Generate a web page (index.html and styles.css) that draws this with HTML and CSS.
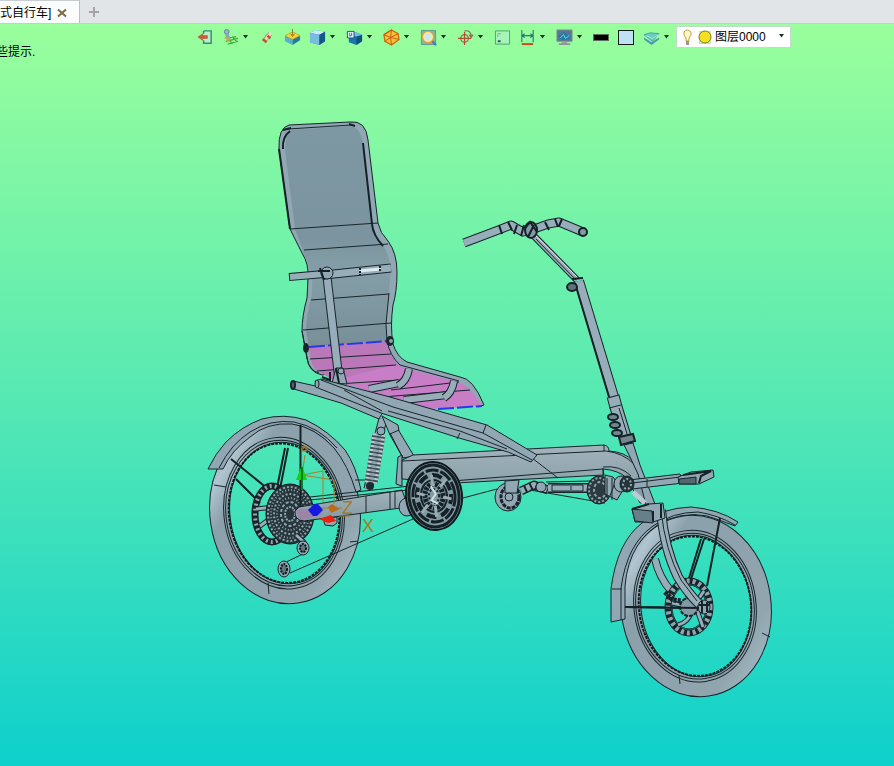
FILE: index.html
```html
<!DOCTYPE html>
<html lang="zh-CN">
<head>
<meta charset="utf-8">
<meta name="viewport" content="width=device-width, initial-scale=1">
<title>自行车</title>
<link rel="stylesheet" href="styles.css">
</head>
<body>
<div class="app">
<header class="tabs">
  <div class="tab"><span>式自行车]</span>
    <button class="tab-button" aria-label="关闭"><svg width="10" height="10" viewBox="0 0 10 10"><path d="M1 1.5L9 8.500M9 1.500L1 8.500" stroke="#806840" stroke-width="2"/></svg></button>
  </div>
  <button class="tab-button add" aria-label="新建"><svg width="12" height="12" viewBox="0 0 12 12"><path d="M6 1V11M1 6H11" stroke="#a6a2a8" stroke-width="2"/></svg></button>
</header>
<main class="viewport">
  <nav class="toolbar" aria-label="视图">
    <button class="tool" aria-label="退出"><svg viewBox="0 0 18 18"><path d="M7 2H15V15H7V12M7 5V2" fill="#b8eec8" stroke="#388878" stroke-width="1.500"/><path d="M1 8.500L6 5V7H11V10H6V12Z" fill="#d85838" stroke="#a04428" stroke-width=".5"/></svg></button>
    <button class="tool menu" aria-label="草图"><svg viewBox="0 0 18 18"><path d="M3 10L15 8M4 13L17 10M6 16L17 13M6 9L11 16M11 8L16 14" stroke="#48a838" stroke-width="1.300"/><circle cx="5" cy="3" r="2.500" fill="#98b8c8" stroke="#5c8498"/><path d="M3 6L7 5L9 11L5 10Z" fill="#88a8b8"/><path d="M3 9L8 12" stroke="#e8a830" stroke-width="2"/></svg><svg class="caret" viewBox="0 0 7 4"><path d="M1 0H6L3.500 3.500Z"/></svg></button>
    <button class="tool" aria-label="刷"><svg viewBox="0 0 18 18"><path d="M5 13L12 5" stroke="#b89878" stroke-width="5"/><path d="M7 11L13 4" stroke="#e8ddc8" stroke-width="3"/><path d="M4 11L8 14M9 7L12 10" stroke="#d84c28" stroke-width="2.500"/></svg></button>
    <button class="tool" aria-label="平面"><svg viewBox="0 0 18 18"><path d="M1 7L9 10V17L1 13Z" fill="#58b0cc"/><path d="M9 10L17 7V12L9 17Z" fill="#2878a0"/><path d="M1 7L9 3L17 7L9 11Z" fill="#f8d830" stroke="#a89830" stroke-width=".7"/><path d="M9 0V7M7 5L9 8L11 5" stroke="#907818" fill="none"/></svg></button>
    <button class="tool menu" aria-label="着色"><svg viewBox="0 0 18 18"><path d="M1 4L7 1L17 3V13L11 17L1 14Z" fill="#3888b8"/><path d="M1 4L7 1L17 3L11 6Z" fill="#c8ecf8"/><path d="M1 4L11 6V17L1 14Z" fill="#78bce0"/><path d="M11 6L17 3V13L11 17Z" fill="#185888"/></svg><svg class="caret" viewBox="0 0 7 4"><path d="M1 0H6L3.500 3.500Z"/></svg></button>
    <button class="tool menu" aria-label="视图"><svg viewBox="0 0 18 18"><path d="M3 6L9 3L17 6V13L11 17L3 14Z" fill="#1878a8"/><path d="M11 8L17 6V13L11 17Z" fill="#105080"/><path d="M3 6L9 3L17 6L11 8Z" fill="#70c0e0"/><path d="M1.500 2.500H8.500V9.500H1.500Z" fill="#e8f8ff" stroke="#284878"/><path d="M4 4V8M6 4V7H4" stroke="#3868a0" fill="none"/></svg><svg class="caret" viewBox="0 0 7 4"><path d="M1 0H6L3.500 3.500Z"/></svg></button>
    <button class="tool menu" aria-label="线框"><svg viewBox="0 0 18 18"><path d="M9 1L16 5L17 11L9 17L2 13L1 6Z" fill="#f8c040" stroke="#c86808" stroke-width="1.300"/><path d="M9 1L8 9L1 6M8 9L16 5M8 9L17 11M8 9L9 17M8 9L2 13M1 6L9 1" stroke="#c05c08" fill="none"/></svg><svg class="caret" viewBox="0 0 7 4"><path d="M1 0H6L3.500 3.500Z"/></svg></button>
    <button class="tool menu" aria-label="缩放"><svg viewBox="0 0 18 18"><path d="M1.500 1.500H16.500V16.500H1.500Z" fill="#78b8a8" stroke="#609890"/><circle cx="8.500" cy="8.500" r="6" fill="#f8eca0" stroke="#e8a038" stroke-width="1.500"/><path d="M5 5H11V12H5Z" fill="#c8e8f8"/><path d="M13 13L17 17" stroke="#4880b0" stroke-width="2.500"/></svg><svg class="caret" viewBox="0 0 7 4"><path d="M1 0H6L3.500 3.500Z"/></svg></button>
    <button class="tool menu" aria-label="定位"><svg viewBox="0 0 18 18"><circle cx="8" cy="10" r="4" fill="none" stroke="#a06048" stroke-width="1.300"/><path d="M8 3V17M1 10H15" stroke="#b84830" stroke-width="1.300"/><path d="M8 2Q15 1 15 8M13 6L15 9L17 6" fill="none" stroke="#886858" stroke-width="1.200"/></svg><svg class="caret" viewBox="0 0 7 4"><path d="M1 0H6L3.500 3.500Z"/></svg></button>
    <button class="tool" aria-label="窗口"><svg viewBox="0 0 18 18"><path d="M1.500 2H16.500V16H1.500Z" fill="#a8f4b8" stroke="#48a070"/><path d="M4 12H7V14H4Z" fill="#205858"/><path d="M4 8V6M4 5H7" stroke="#68a888"/></svg></button>
    <button class="tool menu" aria-label="标注"><svg viewBox="0 0 18 18"><path d="M3 1V14M15 1V14M3 7H15M3 7L6 5M3 7L6 9M15 7L12 5M15 7L12 9" stroke="#287880" stroke-width="1.200" fill="none"/><path d="M3 16H15" stroke="#c84820" stroke-width="2"/></svg><svg class="caret" viewBox="0 0 7 4"><path d="M1 0H6L3.500 3.500Z"/></svg></button>
    <button class="tool menu" aria-label="显示"><svg viewBox="0 0 18 18"><path d="M1 1H17V13H1Z" fill="#587890" stroke="#888898"/><path d="M6 14H12V15H15V17H3V15H6Z" fill="#989098"/><path d="M3 11V7L7 5L9 3L12 6L15 8V11Z" fill="#2878a8"/><path d="M4 10L8 6L10 10L14 7" stroke="#70d8f8" fill="none"/></svg><svg class="caret" viewBox="0 0 7 4"><path d="M1 0H6L3.500 3.500Z"/></svg></button>
    <button class="tool" aria-label="线色"><span class="swatch line"></span></button>
    <button class="tool" aria-label="背景色"><span class="swatch square"></span></button>
    <button class="tool menu" aria-label="图层"><svg viewBox="0 0 18 18"><path d="M1 9L9 14L17 9V11L9 17L1 11Z" fill="#5098b0"/><path d="M1 6L8 4L17 5L10 13Z" fill="#68ccc0" stroke="#4ca0a0"/><path d="M3 7L10 10L17 6" stroke="#a8eee0" fill="none"/></svg><svg class="caret" viewBox="0 0 7 4"><path d="M1 0H6L3.500 3.500Z"/></svg></button>
    <div class="layer">
      <select aria-label="当前图层"><option>图层0000</option></select>
      <svg class="layer-icons" width="32" height="18" viewBox="0 0 32 18"><path d="M4 10Q1 7 2 4Q5 0 9 4Q10 7 7 10V13H4Z" fill="#fff8c8" stroke="#c8a038"/><path d="M4 14H7M4 16H7" stroke="#707880" stroke-width="1.500"/><path d="M17 3H29V16H17Z" fill="#d0e4a8"/><circle cx="23" cy="9" r="6" fill="#f8e020" stroke="#788028"/></svg>
      <svg class="caret layer-caret" viewBox="0 0 7 4"><path d="M1 0H6L3.500 3.500Z"/></svg>
    </div>
  </nav>
  <p class="hint">些提示.</p>

  <svg class="model" viewBox="0 24 894 742" preserveAspectRatio="xMidYMid meet" role="img" aria-label="三维模型">
    <defs>
      <linearGradient id="tyre" x1="0" y1="0" x2="1" y2="1"><stop offset="0" stop-color="#879da9"/><stop offset=".13" stop-color="#b0c5d0"/><stop offset=".25" stop-color="#8aa0ab"/><stop offset=".8" stop-color="#91a5af"/><stop offset="1" stop-color="#a9bdc8"/></linearGradient>
      <linearGradient id="fabric" x1="0" y1="0" x2="0" y2="1"><stop offset="0" stop-color="#7e98a3"/><stop offset=".5" stop-color="#7b949f"/><stop offset=".65" stop-color="#849ea7"/><stop offset="1" stop-color="#788f98"/></linearGradient>
      <linearGradient id="beam" x1="0" y1="0" x2="0" y2="1"><stop offset="0" stop-color="#a2b3bc"/><stop offset="1" stop-color="#839aa5"/></linearGradient>
    </defs>

    <!-- rear wheel -->
    <g transform="rotate(-8 285 513)" fill="none">
      <ellipse cx="285" cy="513" rx="65" ry="81" stroke="#17252a" stroke-width="21"/>
      <ellipse cx="285" cy="513" rx="65" ry="81" stroke="url(#tyre)" stroke-width="19"/>
      <ellipse cx="284" cy="513" rx="60" ry="76" class="thin"/>
      <ellipse cx="284" cy="513" rx="58" ry="73" class="thin"/>
      <ellipse cx="284" cy="513" rx="55" ry="70" stroke="#111c20" stroke-width="2" stroke-dasharray="3 1"/>
    </g>
    <path class="metal" d="M208 469Q215 454 226 442Q242 426 262 419Q284 413 306 420Q329 431 345 450Q356 466 361 490L356 492Q348 465 334 448Q315 427 292 424Q267 422 250 437Q231 451 223 469Z"/>
    <path class="thin" d="M219 468Q231 444 250 432Q270 419 294 422Q319 427 337 448M214 485L226 487M268 583L269 594M350 542L358 541"/>
    <path class="thick" d="M231 459L268 489M236 479L260 503M285 448L277 488M288 448L280 489"/>
    <ellipse cx="272" cy="514" rx="17" ry="28" fill="none" stroke="#17242a" stroke-width="7"/>
    <ellipse cx="272" cy="514" rx="17" ry="28" fill="none" stroke="#94a5ac" stroke-width="4" stroke-dasharray="2 3"/>
    <path class="edge" stroke-width="5" d="M256 509L274 507M260 526L275 515"/><path class="tube" stroke-width="3" d="M256 509L274 507M260 526L275 515"/>
    <ellipse cx="290" cy="514" rx="24" ry="30" fill="#26363c" stroke="#101b1f"/>
    <g fill="none" stroke="#91a4ac" stroke-width="2"><ellipse cx="290" cy="514" rx="22" ry="27" stroke-dasharray="2 2"/><ellipse cx="290" cy="514" rx="19" ry="24" stroke-dasharray="1 2"/><ellipse cx="290" cy="514" rx="16" ry="20" stroke-dasharray="2 2"/><ellipse cx="290" cy="514" rx="13" ry="16" stroke-dasharray="1 2"/><ellipse cx="290" cy="514" rx="9" ry="12" stroke-dasharray="3 2"/><ellipse cx="290" cy="514" rx="5" ry="7" stroke-dasharray="2 1"/></g>
    <path class="thin" d="M290 573L413 519M282 564L305 553"/><path class="edge" stroke-width="5" d="M296 535L305 543"/><path class="tube" stroke-width="3" d="M296 535L305 543"/>
    <g class="metal"><ellipse cx="303" cy="548" rx="6" ry="7"/><ellipse cx="284" cy="569" rx="6" ry="8"/></g>
    <g fill="#607780" stroke="#0d1719" stroke-width="2" stroke-dasharray="2 1"><ellipse cx="303" cy="548" rx="3" ry="4"/><ellipse cx="284" cy="569" rx="3" ry="5"/></g>
    <path class="metal" d="M323 518L337 517L337 523L333 526L325 525Z"/>

    <!-- rear arm -->
    <path fill="url(#beam)" class="outline" d="M299 507L402 490L408 507L304 521Q294 520 295 511Z"/>
    <path class="thin" d="M310 497L410 486M310 500L408 490M366 496V512M390 492V509M395 491V508M355 480H366"/>
    <path class="thick" d="M300.500 425V507"/>

    <!-- shock absorber and strut -->
    <path class="edge" stroke-width="9" d="M383 419L379 434M370 480L368 489"/><path class="tube" stroke-width="7" d="M383 419L379 434M370 480L368 489"/>
    <path d="M379 434L371 483" stroke="#41535a" stroke-width="13"/>
    <path d="M379 434L371 483" stroke="#c1ced3" stroke-width="13" stroke-dasharray="2 2"/>
    <path d="M379 434L371 483" stroke="#8ca1aa" stroke-width="6" stroke-dasharray="2 2"/>
    <circle cx="381" cy="431" r="4" class="metal"/><circle cx="370" cy="486" r="4" fill="#1d2a2f"/>
    <path class="metal" d="M382 416L398 425L399 431L414 456L403 458L390 435Z"/><path class="thin" d="M390 434L399 430M403 458L390 433"/>

    <!-- main beam -->
    <path class="metal" d="M398 457L402 455V486L396 484Z"/>
    <path fill="url(#beam)" class="outline" d="M402 460L413 455L604 445Q609 446 609 451Q625 452 633 461L641 478L649 502L640 503L627 478Q618 470 603 469L604 475L455 483L402 479Z"/>
    <path class="thin" d="M402 461L606 451Q623 453 634 464M452 481L603 469M604 445V451M603 467Q620 465 631 476M603 468V480"/>
    <path class="thin" d="M532 458L558 478"/>

    <!-- drive chainring -->
    <ellipse cx="407" cy="507" rx="8" ry="9" class="metal"/>
    <g transform="rotate(-7 434 496)">
      <ellipse cx="434" cy="496" rx="28" ry="34" fill="#829aa4" stroke="#101b20" stroke-width="2"/>
      <g fill="none" stroke="#152126"><ellipse cx="434" cy="496" rx="25" ry="31" stroke-width="3"/><ellipse cx="434" cy="496" rx="21" ry="26" stroke-width="3" stroke-dasharray="13 2"/><ellipse cx="434" cy="496" rx="17" ry="21" stroke-width="4" stroke-dasharray="10 5"/><ellipse cx="434" cy="496" rx="13" ry="16" stroke-width="2"/><ellipse cx="434" cy="496" rx="9" ry="12" stroke-width="5" stroke-dasharray="3 1"/><ellipse cx="434" cy="496" rx="5" ry="7" stroke-width="2" stroke-dasharray="2 2"/></g>
      <path d="M434 475V486M434 506V517M417 491L425 494M443 498L451 501M420 511L427 504M441 488L448 481" stroke="#9aabb1" stroke-width="3"/>
      <path d="M432 486L436 494L431 500L437 504" fill="none" stroke="#d4dfe2" stroke-width="2"/>
    </g>
    <path class="thin" d="M463 498L497 489"/>

    <!-- idler and front drive -->
    <ellipse cx="508" cy="497" rx="13" ry="14" class="metal"/><ellipse cx="510" cy="497" rx="9" ry="11" fill="none" stroke="#17242a" stroke-width="3" stroke-dasharray="4 1"/>
    <path class="metal" d="M505 481L519 480L517 493H505Z"/><circle cx="509" cy="497" r="4" class="metal"/>
    <path class="edge" stroke-width="9" d="M521 491L534 485L548 490"/><path class="tube" stroke-width="6" stroke-dasharray="4 2" d="M521 491L534 485L548 490"/><circle cx="541" cy="487" r="5" class="metal"/>
    <path class="thin" d="M530 490L605 503M546 482L590 481"/>
    <path class="edge" stroke-width="10" d="M548 488H588"/><path class="tube" stroke-width="7" d="M548 488H588"/><path class="thin" d="M552 485H583V491H552ZM571 486V490"/>
    <ellipse cx="599" cy="490" rx="12" ry="14" fill="#2b3a40" class="outline"/><g fill="none" stroke="#8ea0a8" stroke-width="2"><ellipse cx="599" cy="490" rx="10" ry="12" stroke-dasharray="2 2"/><ellipse cx="600" cy="490" rx="6" ry="8" stroke-dasharray="3 2"/></g>
    <path class="metal" d="M605 475L613 477L623 490L617 500L605 494Z"/><path class="thin" d="M607 478V497M612 478V500M616 480L610 496"/>

    <!-- handlebar and steering column -->
    <path class="edge" stroke-width="7" d="M533 235L577 280"/><path class="tube" stroke-width="5" d="M533 235L577 280"/><path d="M534 234L577 277" stroke="#d3dfe5" stroke-width="1"/><path class="thin" d="M536 239L576 280"/>
    <path class="edge" stroke-width="9" d="M464 243L501 229L511 225L523 232L534 229L548 224L559 222L583 232"/>
    <path class="tube" stroke-width="7" d="M464 243L501 229L511 225L523 232L534 229L548 224L559 222L583 232"/>
    <path class="thick" d="M499 225L502 234M508 222L512 230M517 225L514 234M524 225L521 236M545 222L549 230M555 219L558 227M562 219L559 226"/>
    <ellipse cx="531" cy="230" rx="6" ry="8" fill="#839aa4" stroke="#142126" stroke-width="2"/><path class="thick" d="M525 228L530 222L537 232M528 237L534 225"/><circle cx="583" cy="232" r="4" fill="#819ba4" stroke="#142126" stroke-width="2"/>
    <path class="edge" stroke-width="10" d="M579 281L614 397"/><path class="tube" stroke-width="8" d="M579 281L614 397"/><path class="thick" d="M575 283L609 397M572 279L583 278"/>
    <ellipse cx="572" cy="287" rx="5" ry="4" fill="#5c737d" stroke="#142126" stroke-width="2"/>
    <path class="edge" stroke-width="13" d="M613 396L616 407L627 443"/><path class="tube" stroke-width="11" d="M613 396L616 407L627 443"/><path class="thin" d="M608 398L619 395M609 408L621 405M619 408L629 440"/>
    <g fill="#71868e" stroke="#142126" stroke-width="2"><ellipse cx="613" cy="417" rx="5" ry="3"/><ellipse cx="615" cy="425" rx="5" ry="3"/><ellipse cx="617" cy="433" rx="5" ry="3"/><path d="M619 437L633 434L635 441L621 445Z"/></g>
    <path class="metal" d="M624 445L633 443L640 465L655 504L646 505L638 474L630 457Z"/>
    <path d="M633 492L645 503" stroke="#bacbd4" stroke-width="5"/>

    <!-- pedal -->
    <path class="metal" d="M629 480L680 474L683 483L632 489Z"/><path class="thin" d="M647 479V487M632 483L680 477"/>
    <path class="metal" d="M678 477L691 472L713 470L714 477L699 484L679 484Z"/><path fill="#526970" class="outline" d="M679 479L696 477V484H679Z"/><path class="thick" d="M683 475L711 471L701 476L699 483"/>
    <ellipse cx="621" cy="484" rx="7" ry="8" class="metal"/><ellipse cx="627" cy="484" rx="7" ry="8" fill="#263439" class="outline"/><ellipse cx="627" cy="484" rx="4" ry="5" fill="none" stroke="#91a5ae" stroke-width="2" stroke-dasharray="2 2"/>

    <!-- front wheel -->
    <g transform="rotate(-8 696 606)" fill="none">
      <ellipse cx="696" cy="606" rx="65" ry="81" stroke="#17252a" stroke-width="21"/>
      <ellipse cx="696" cy="606" rx="65" ry="81" stroke="url(#tyre)" stroke-width="19"/>
      <ellipse cx="695" cy="606" rx="61" ry="76" class="thin"/>
      <ellipse cx="695" cy="606" rx="59" ry="73" class="thin"/>
      <ellipse cx="695" cy="606" rx="56" ry="70" stroke="#111c20" stroke-width="2" stroke-dasharray="3 1"/>
    </g>
    <path class="metal" d="M611 622V589Q617 542 642 523Q662 508 691 507Q718 509 738 522L735 526L719 520Q695 509 666 520Q629 539 625 586V619Z"/>
    <path class="thin" d="M621 620V588Q627 544 653 526Q673 512 698 512Q718 515 735 525M612 589H622M762 633L770 637M679 675L680 684"/>
    <path class="thick" d="M704 539L691 579M701 539L689 578M720 518L707 586M625 607L700 608"/>
    <path class="edge" stroke-width="8" d="M655 559Q659 577 671 591"/><path class="tube" stroke-width="6" d="M655 559Q659 577 671 591"/>
    <ellipse cx="689" cy="607" rx="21" ry="26" fill="none" stroke="#17242a" stroke-width="7"/><ellipse cx="689" cy="607" rx="21" ry="26" fill="none" stroke="#91a5ae" stroke-width="5" stroke-dasharray="3 3"/>
    <ellipse cx="689" cy="607" rx="17" ry="22" fill="none" class="thin"/>
    <path class="edge" stroke-width="5" d="M672 603L686 606M678 625Q689 622 691 612M703 627L697 610M683 584L690 601M704 591L695 604"/><path class="tube" stroke-width="3" d="M672 603L686 606M678 625Q689 622 691 612M703 627L697 610M683 584L690 601M704 591L695 604"/>
    <path d="M665 592L673 600L681 601L687 612" fill="none" stroke="#17242a" stroke-width="5" stroke-dasharray="3 1"/>
    <ellipse cx="689" cy="607" rx="9" ry="9" fill="#829aa4" stroke="#17242a" stroke-width="2" stroke-dasharray="4 1"/>
    <path class="edge" stroke-width="10" d="M661 510Q664 548 678 577Q687 592 699 604"/><path class="tube" stroke-width="8" d="M661 510Q664 548 678 577Q687 592 699 604"/><path class="thin" d="M661 510Q665 550 681 580L697 601"/>
    <ellipse cx="704" cy="607" rx="6" ry="7" class="metal"/><path d="M699 605H710M702 601V613M707 602V612" stroke="#17242a" stroke-width="2"/><path class="thick" d="M625 607L699 608"/>
    <path class="metal" d="M632 509L649 504L663 503L665 518L653 522H635Z"/><path fill="#677f88" class="outline" d="M632 509L652 511L653 523L635 521Z"/><path class="thick" d="M632 509L649 504M653 511V521M661 504V518"/>

    <!-- seat back and cushion -->
    <path class="metal" d="M279 149Q278 128 289 125L350 122Q366 120 368 140L378 223Q380 233 388 241Q397 253 397 272Q397 292 393 305Q390 326 393 344Q397 357 407 362L460 377Q473 378 484 405L478 407L467 390L398 371L384 364L322 375Q308 372 307 357L302 331Q302 316 307 298L308 278Q309 264 302 253L290 229Z"/>
    <path fill="url(#fabric)" d="M285 150Q286 132 292 130L350 126Q360 127 363 143L372 224Q373 235 384 247Q393 260 389 292L386 324L387 341L309 347L306 331Q306 316 311 299Q315 278 306 259L295 229Z"/>
    <path fill="#bb78b9" d="M309 347L387 341Q389 358 401 367L432 378L396 397L336 382L320 372Q313 369 311 360Z"/>
    <path fill="#c77ec7" d="M394 365L458 382Q469 385 482 406L430 409L384 397L336 380Z"/>
    <path class="thin" d="M288 129L351 125M290 229L378 223M304 250L388 244M311 300L389 294M303 330L391 323M310 359L391 354M317 371L396 365M337 384L400 380M391 390L459 382M382 397L470 390"/>
    <path class="thick" d="M283 149Q282 137 290 131M363 143L372 224Q373 235 383 246M291 128L283 130M349 124L355 126M279 149L290 229"/>
    <path class="thin" d="M389 293L386 324L387 341Q390 356 400 365L459 381M302 331L307 359Q310 371 319 373"/>
    <path d="M309 347L388 341M438 409L482 406" stroke="#2938ed" stroke-width="2" stroke-dasharray="16 3"/>
    <ellipse cx="306" cy="348" rx="3" ry="5" fill="#18252b"/><ellipse cx="390" cy="341" rx="4" ry="5" fill="#18252b"/><circle cx="391" cy="341" r="2" fill="#8da1aa"/>
    <path class="edge" stroke-width="8" d="M369 389L399 383M404 400L447 395"/><path class="tube" stroke-width="6" d="M369 389L399 383M404 400L447 395"/>
    <path class="edge" stroke-width="8" d="M409 369Q407 381 398 386M454 381Q452 393 444 398"/><path class="tube" stroke-width="6" d="M409 369Q407 381 398 386M454 381Q452 393 444 398"/>
    <path class="edge" stroke-width="8" d="M289 277L324 274"/><path class="tube" stroke-width="6" d="M290 277L324 274"/>
    <path class="edge" stroke-width="9" d="M327 277L339 380"/><path class="tube" stroke-width="7" d="M327 277L339 380"/>
    <path class="edge" stroke-width="9" d="M324 275L391 268"/><path class="tube" stroke-width="7" d="M324 275L391 268"/><path d="M359 271L381 269" stroke="#e1eaed" stroke-width="3"/><path class="thick" d="M360 268V275M380 266V272" stroke-dasharray="2 1"/>
    <ellipse cx="327" cy="273" rx="6" ry="6" class="metal"/><path class="thick" d="M320 268L324 280M318 271H330"/>
    <path class="metal" d="M332 383L336 368L343 368L347 384Z"/><circle cx="341" cy="371" r="3" class="metal"/><path class="thick" d="M336 368L339 383M322 377L330 380V372"/>

    <!-- seat rails -->
    <path class="metal" d="M293 381L320 387L356 395L383 412L379 419L341 403L294 389Z"/><ellipse cx="293" cy="385" rx="2" ry="4" fill="#586e78" stroke="#17242a" stroke-width="2"/>
    <path class="metal" d="M315 381L321 379L390 397L487 425L537 455L531 462L508 452L459 438L381 413L318 388Z"/>
    <path class="thin" d="M321 380L393 407L483 433L532 460M388 411L460 431L507 449M486 425L483 433M460 433L457 439M344 390L382 411"/>
    <ellipse cx="317" cy="384" rx="2" ry="4" class="metal"/>

    <!-- origin triad -->
    <g fill="none" stroke="#b27a27" stroke-width="1"><path d="M302 475L323 471V502M302 475L334 480V504M305 455L302 474M302 447H307V451H302ZM319 508H342M339 516H350"/></g>
    <path d="M296 510L323 507L321 515L300 520Z" fill="#a779a3" opacity=".7"/>
    <path d="M302 465L307 480H296Z" fill="#16cf17"/><path d="M302 467V490" stroke="#087e1f" stroke-width="2"/>
    <path d="M308 510L314 504H318L323 510L317 516H313Z" fill="#1419df"/><path d="M328 507L332 504L340 509L331 513Z" fill="#b86d16"/><path d="M319 519L331 515L336 521L328 523Z" fill="#ea210d"/>
    <text class="axis" x="342" y="514">Z</text><text class="axis" x="362" y="532">X</text>
    <text class="axis mini" x="301" y="451">Z</text>
  </svg>
</main>
</div>
</body>
</html>
```
FILE: styles.css
```css
* { box-sizing: border-box; }
body { margin: 0; color: #000; font: 12px/16px "Liberation Sans", "Noto Sans CJK SC", sans-serif; }
button { padding: 0; border: 0; background: none; font: inherit; }
.app { display: flex; flex-direction: column; min-height: 100vh; }
.tabs { display: flex; align-items: stretch; height: 24px; background: #e1e5e8; border-bottom: 1px solid #c4ced0; }
.tab { display: flex; align-items: center; gap: 6px; padding: 2px 12px 0 0; background: #fcfdfd; border-top: 1px solid #c8cdd0; border-right: 1px solid #b9c0c4; white-space: nowrap; }
.tab-button { display: flex; align-items: center; }
.add { margin-left: 8px; }
.viewport { position: relative; flex: 1; overflow: hidden; background: linear-gradient(#9aff9c, #54e8b4 52%, #0ed0cc); }
.toolbar { position: relative; z-index: 1; display: flex; align-items: center; height: 26px; padding-left: 193px; }
.tool { display: flex; align-items: center; flex: none; width: 25px; height: 24px; padding-left: 4px; }
.tool > svg:first-child { flex: none; width: 17px; height: 17px; }
.menu { width: 37px; gap: 3px; }
.caret { width: 7px; height: 4px; fill: #20302a; }
.swatch { display: block; border: 1px solid #101818; }
.swatch.line { width: 16px; height: 7px; background: #000; border-color: #58705c; }
.swatch.square { width: 16px; height: 15px; background: #c0e0f4; }
.layer { position: relative; flex: none; width: 115px; }
.layer select { display: block; appearance: none; width: 100%; height: 22px; padding: 0 20px 0 38px; border: 1px solid #c0dcc8; border-radius: 0; background: #fff; color: #000; font: inherit; }
.layer-icons { position: absolute; left: 6px; top: 2px; pointer-events: none; }
.layer-caret { position: absolute; right: 6px; top: 8px; pointer-events: none; }
.hint { position: relative; z-index: 1; margin: -6px 0 0 -4px; width: max-content; }
.model { position: absolute; inset: 0; width: 100%; height: 100%; }
.metal { fill: #91a7b3; stroke: #17252b; stroke-width: 1; }
.outline { stroke: #17252b; stroke-width: 1; }
.edge { fill: none; stroke: #17252b; stroke-linejoin: round; }
.tube { fill: none; stroke: #97adb9; stroke-linejoin: round; }
.thin { fill: none; stroke: #18262b; stroke-width: 1; }
.thick { fill: none; stroke: #142126; stroke-width: 2; }
.axis { fill: #a87925; font: 18px "Liberation Sans", sans-serif; }
.mini { font-size: 8px; }
```
